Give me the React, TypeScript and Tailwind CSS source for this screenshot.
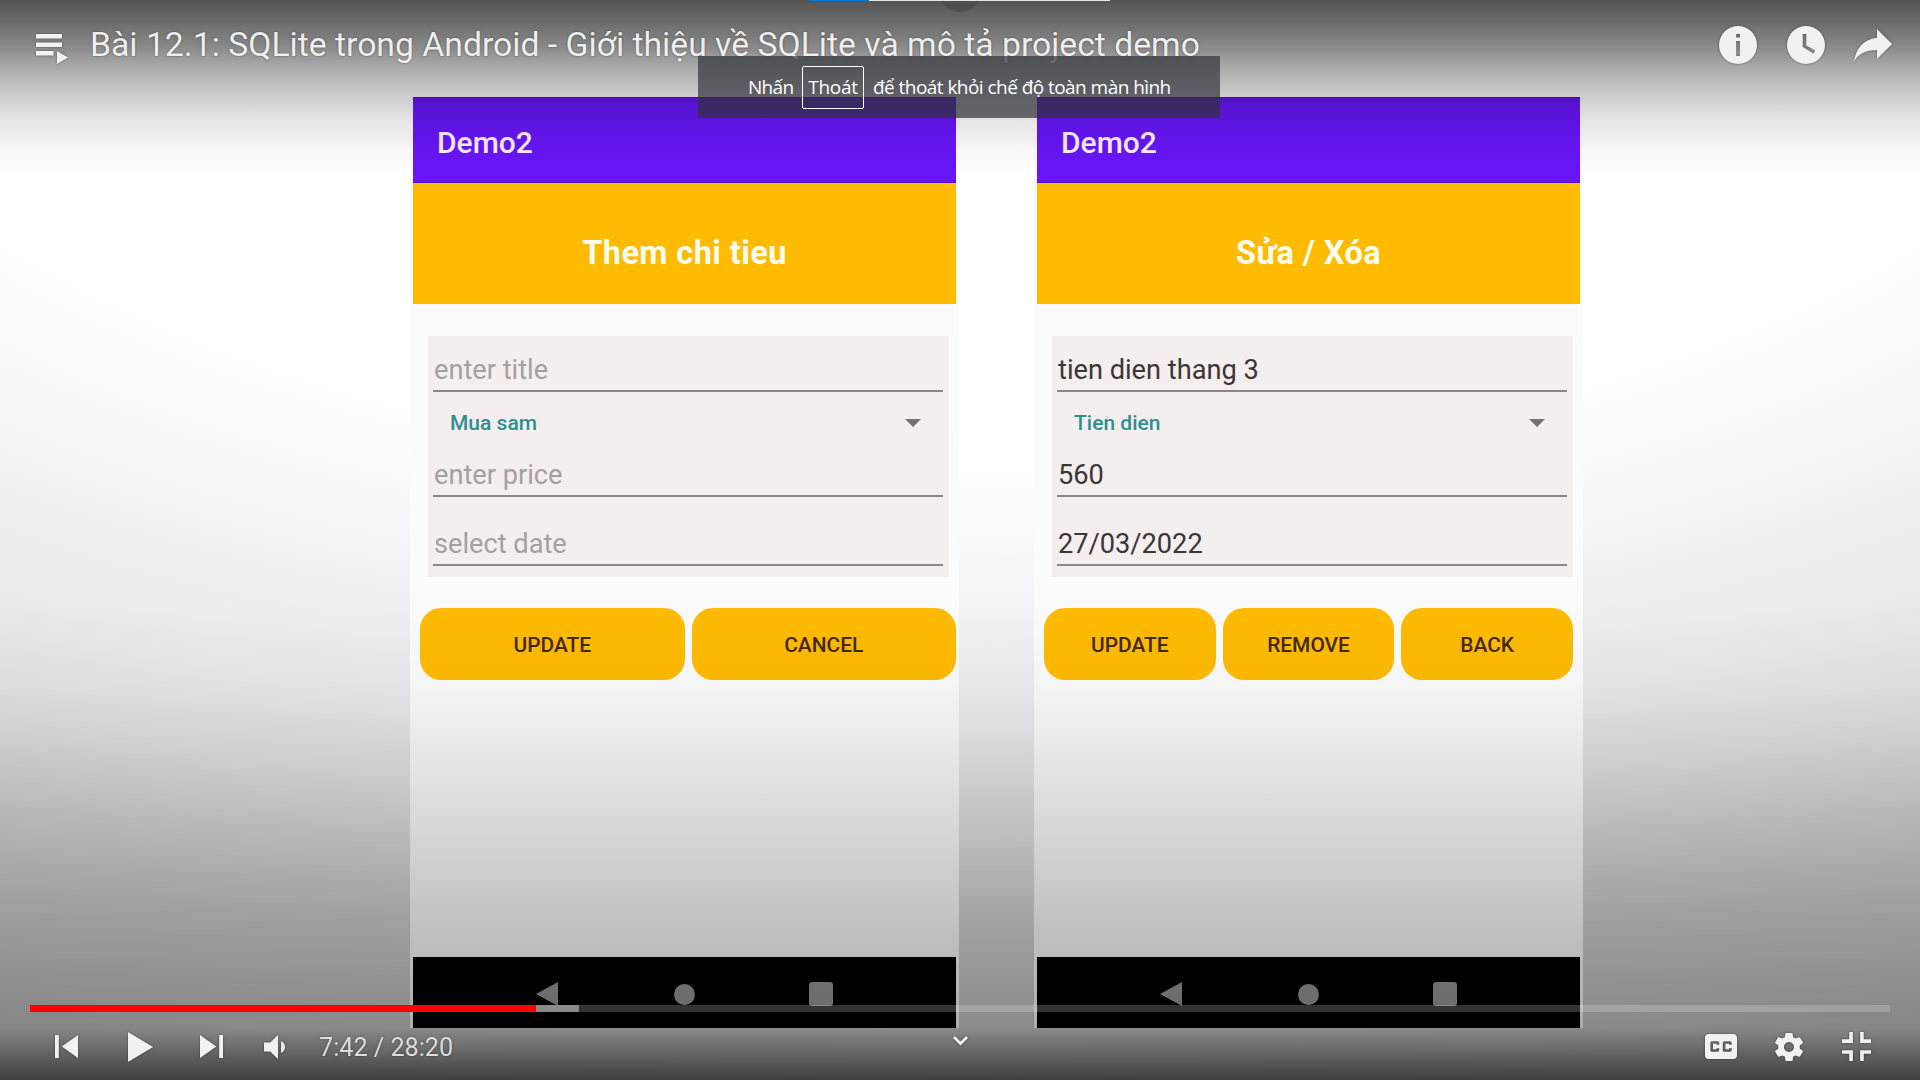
import React from "react";

const iconShadow = "drop-shadow-[0_0_1px_rgba(0,0,0,0.45)]";

function Icon({
  box,
  className,
  children,
}: {
  box: string;
  className: string;
  children: React.ReactNode;
}) {
  return (
    <svg
      viewBox={box}
      preserveAspectRatio="none"
      className={`shrink-0 overflow-visible fill-[#f1f1f1] ${iconShadow} ${className}`}
    >
      {children}
    </svg>
  );
}

function Field({ text, filled, className }: { text: string; filled?: boolean; className: string }) {
  return (
    <div
      className={`ml-[5px] mr-[6px] flex items-end border-b-2 border-[#8b8787] pb-[4px] text-[27.2px] leading-[32px] ${
        filled ? "text-[#3a3637]" : "text-[#a5a0a0]"
      } ${className}`}
    >
      <span className="ml-px">{text}</span>
    </div>
  );
}

type PhoneProps = {
  heading: string;
  title: string;
  category: string;
  price: string;
  date: string;
  filled?: boolean;
  buttons: string[];
  rowClass: string;
};

function Phone({ heading, title, category, price, date, filled, buttons, rowClass }: PhoneProps) {
  return (
    <section className="flex h-[931px] w-[549px] flex-col bg-[#fbfbfb] px-[3px]">
      <header className="flex h-[86px] items-center border-y border-[#4d12a8] bg-[#6716f7] pl-[24px] pt-[4px] text-[30px] font-medium text-[#fff0ff]">
        Demo2
      </header>
      <div className="flex h-[121px] items-center justify-center bg-[#ffbb02] pt-[20px] text-[32.5px] font-bold tracking-[0.4px] text-[#fffdf0]">
        {heading}
      </div>
      <div className="ml-[15px] mt-[32px] flex h-[241px] w-[521px] flex-col bg-[#f4eeee]">
        <Field text={title} filled={filled} className="h-[56px]" />
        <div className="flex h-[60px] items-center justify-between pl-[22px] pr-[28px] pt-[2px] text-[21px] font-medium text-[#2f8f8e]">
          <span className="mt-[2px]">{category}</span>
          <span className="h-0 w-0 border-x-[8px] border-t-[8px] border-x-transparent border-t-[#737070]" />
        </div>
        <Field text={price} filled={filled} className="h-[45px]" />
        <Field text={date} filled={filled} className="h-[69px]" />
      </div>
      <div className={`mt-[31px] flex h-[72px] gap-[7px] pl-[7px] ${rowClass}`}>
        {buttons.map((b) => (
          <div
            key={b}
            className="flex flex-1 items-center justify-center rounded-[21px] bg-[#ffbb02] pt-[4px] text-[20.9px] font-medium text-[#44280a]"
          >
            {b}
          </div>
        ))}
      </div>
      <div className="mt-auto flex h-[71px] items-center justify-between bg-black pl-[123px] pr-[123px] pt-[3px]">
        <span className="h-0 w-0 border-y-[12px] border-r-[22px] border-y-transparent border-r-[#999999]" />
        <span className="ml-[2px] h-[21px] w-[21px] rounded-full bg-[#999999]" />
        <span className="h-[24px] w-[24px] rounded-[3px] bg-[#999999]" />
      </div>
    </section>
  );
}

export default function App() {
  return (
    <div
      className="relative h-[1080px] w-[1920px] overflow-hidden bg-[radial-gradient(2520px_1200px_at_960px_-100px,#ffffff_0%,#ffffff_44%,#fcfcfd_50.7%,#f6f6f8_56.4%,#efeff2_63%,#eaeaec_69.7%,#e5e5e7_73%,#e1e1e3_76.8%,#dcdcde_79.7%,#d7d7d8_82.6%,#d2d2d3_85.6%,#cdcdce_89.3%,#c9c9c9_94%,#c3c3c4_100%)] [font-family:Roboto,sans-serif]"
    >
      <main className="flex gap-[75px] pl-[410px] pt-[97px]">
        <Phone
          heading="Them chi tieu"
          title="enter title"
          category="Mua sam"
          price="enter price"
          date="select date"
          buttons={["UPDATE", "CANCEL"]}
          rowClass="pr-0"
        />
        <Phone
          heading="Sửa / Xóa"
          title="tien dien thang 3"
          category="Tien dien"
          price="560"
          date="27/03/2022"
          filled
          buttons={["UPDATE", "REMOVE", "BACK"]}
          rowClass="pr-[7px]"
        />
      </main>

      {/* Player chrome laid over the video */}
      <div className="absolute inset-0 flex flex-col justify-between bg-[linear-gradient(180deg,rgba(0,0,0,0.67)_0px,rgba(0,0,0,0.58)_22px,rgba(0,0,0,0.47)_45px,rgba(0,0,0,0.34)_66px,rgba(0,0,0,0.19)_97px,rgba(0,0,0,0.1)_120px,rgba(0,0,0,0.03)_150px,rgba(0,0,0,0)_180px,rgba(0,0,0,0)_600px,rgba(0,0,0,0.025)_680px,rgba(0,0,0,0.055)_725px,rgba(0,0,0,0.14)_825px,rgba(0,0,0,0.235)_930px,rgba(0,0,0,0.31)_1028px,rgba(0,0,0,0.5)_1055px,rgba(0,0,0,0.68)_1080px)]">
        <header className="flex h-[90px] items-center pl-[36px] pr-[28px]">
          <Icon box="0 0 32 30" className="mt-[8px] h-[30px] w-[32px]">
            <path d="M0 0h26v4.5H0zM0 8.5h26V13H0zM0 17h17.500v4.500H0zM21 17v13l11-6.500z" />
          </Icon>
          <h1 className="ml-[22px] whitespace-nowrap text-[33.75px] tracking-[-0.015px] text-[#eeeeee] [text-shadow:0_0_2px_rgba(0,0,0,0.5)]">
            Bài 12.1: SQLite trong Android - Giới thiệu về SQLite và mô tả project demo
          </h1>
          <div className="ml-auto flex items-center gap-[30px]">
            <Icon box="0 0 38 38" className="h-[38px] w-[38px]">
              <path
                fillRule="evenodd"
                d="M19 0a19 19 0 1 1 0 38a19 19 0 0 1 0-38zM17.200 8v3.600h3.700V8zM17.200 15v15h3.700V15z"
              />
            </Icon>
            <Icon box="0 0 38 38" className="h-[38px] w-[38px]">
              <path
                fillRule="evenodd"
                d="M19 0a19 19 0 1 1 0 38a19 19 0 0 1 0-38zM15.700 8v13l10.800 6.500 1.700-2.900-8.900-5.200V8z"
              />
            </Icon>
            <Icon box="0 0 38 33" className="-ml-[1px] h-[33px] w-[38px]">
              <path d="M23 0l15 15-15 15V21C12 21 5 24.500 0 32.500C2 20 8.500 10.500 23 8.700z" />
            </Icon>
          </div>
        </header>

        <footer className="flex flex-col">
          <div className="mx-[30px] flex h-[7px] bg-white/20">
            <div className="w-[506px] bg-[#ff0000]" />
            <div className="w-[43px] bg-[#8a8a8a]" />
          </div>
          <div className="flex h-[68px] items-center pl-[55px] pr-[49px] pt-px">
            <Icon box="12 12 12 12" className="h-[23px] w-[23px]">
              <path d="M12 12h2v12h-2zM15.500 18l8.500 6V12z" />
            </Icon>
            <Icon box="12 10 13 16" className="ml-[50px] h-[30px] w-[25px]">
              <path d="M12 10v16l13-8z" />
            </Icon>
            <Icon box="12 12 12 12" className="ml-[47px] h-[23px] w-[23px]">
              <path d="M12 24l8.500-6L12 12zM22 12v12h2V12z" />
            </Icon>
            <Icon box="8 10 13.5 16" className="ml-[41px] h-[24px] w-[21px]">
              <path d="M8 21h4l5 5V10l-5 5H8zM19 14v8c1.480-.680 2.500-2.230 2.500-4c0-1.740-1.020-3.260-2.500-4z" />
            </Icon>
            <span className="ml-[34px] mt-[2px] w-[134px] whitespace-nowrap text-[25.200px] text-[#dddddd] [text-shadow:0_0_2px_rgba(0,0,0,0.5)]">
              7:42 / 28:20
            </span>
            <Icon box="0 0 14 8" className="mb-[12px] ml-[500px] h-[9px] w-[15px]">
              <path d="M0 1.800L1.800 0L7 4.800L12.200 0L14 1.800L7 8.500z" />
            </Icon>
            <Icon box="9 11 18 14" className="ml-auto h-[25px] w-[32px]">
              <path
                fillRule="evenodd"
                d="M11 11c-1.110 0-2 .9-2 2v10c0 1.100.890 2 2 2h14c1.100 0 2-.9 2-2V13c0-1.100-.9-2-2-2zM17 17h-1.500v-.5h-2v3h2V19H17v1c0 .550-.450 1-1 1h-3c-.550 0-1-.450-1-1v-4c0-.550.450-1 1-1h3c.550 0 1 .450 1 1zM24 17h-1.500v-.5h-2v3h2V19H24v1c0 .550-.450 1-1 1h-3c-.550 0-1-.450-1-1v-4c0-.550.450-1 1-1h3c.550 0 1 .450 1 1z"
              />
            </Icon>
            <Icon box="10.2 10.1 15.6 15.8" className="ml-[38px] h-[28px] w-[28px]">
              <path
                fillRule="evenodd"
                d="m 23.94,18.78 c .03,-0.25 .05,-0.51 .05,-0.78 0,-0.27 -0.02,-0.52 -0.05,-0.78 l 1.68,-1.32 c .15,-0.12 .19,-0.33 .09,-0.51 l -1.6,-2.76 c -0.09,-0.17 -0.31,-0.24 -0.48,-0.17 l -1.99,.8 c -0.41,-0.32 -0.86,-0.58 -1.35,-0.78 l -0.30,-2.12 c -0.02,-0.19 -0.19,-0.33 -0.39,-0.33 l -3.2,0 c -0.2,0 -0.36,.14 -0.39,.33 l -0.30,2.12 c -0.48,.2 -0.93,.47 -1.35,.78 l -1.99,-0.8 c -0.18,-0.07 -0.39,0 -0.48,.17 l -1.6,2.76 c -0.10,.17 -0.05,.39 .09,.51 l 1.68,1.32 c -0.03,.25 -0.05,.52 -0.05,.78 0,.26 .02,.52 .05,.78 l -1.68,1.32 c -0.15,.12 -0.19,.33 -0.09,.51 l 1.6,2.76 c .09,.17 .31,.24 .48,.17 l 1.99,-0.8 c .41,.32 .86,.58 1.35,.78 l .30,2.12 c .02,.19 .19,.33 .39,.33 l 3.2,0 c .2,0 .36,-0.14 .39,-0.33 l .30,-2.12 c .48,-0.2 .93,-0.47 1.35,-0.78 l 1.99,.8 c .18,.07 .39,0 .48,-0.17 l 1.6,-2.76 c .09,-0.17 .05,-0.39 -0.09,-0.51 l -1.68,-1.32 z m -5.94,2.01 c -1.54,0 -2.8,-1.25 -2.8,-2.8 0,-1.54 1.25,-2.8 2.8,-2.8 1.54,0 2.8,1.25 2.8,2.8 0,1.54 -1.25,2.8 -2.8,2.8 z"
              />
            </Icon>
            <Icon box="10 10 16 16" className="ml-[39px] h-[29px] w-[29px]">
              <path d="M14 14h-4v2h6v-6h-2zM22 14v-4h-2v6h6v-2zM20 26h2v-4h4v-2h-6zM10 22h4v4h2v-6h-6z" />
            </Icon>
          </div>
        </footer>
      </div>

      {/* Fullscreen hint and the tab strip peeking in from the top edge */}
      <div className="absolute left-[938px] top-[-32px] h-[44px] w-[44px] rounded-full bg-[#4e4e4e]" />
      <div className="absolute left-[809px] top-0 flex h-px w-[301px] bg-[#e4e4e4]">
        <div className="w-[60px] bg-[#0078d7]" />
      </div>
      <div className="absolute left-[698px] top-[56px] flex h-[62px] w-[522px] items-center whitespace-nowrap bg-[#2f323b]/70 pl-[50px] text-[19px] text-white [font-family:'Open_Sans',sans-serif]">
        <span className="w-[54px] tracking-[-0.7px]">Nhấn</span>
        <span className="flex h-[43px] w-[62px] items-center justify-center rounded-[2px] border border-white tracking-[-0.3px]">
          Thoát
        </span>
        <span className="ml-[9px] tracking-[-0.55px]">để thoát khỏi chế độ toàn màn hình</span>
      </div>
    </div>
  );
}
